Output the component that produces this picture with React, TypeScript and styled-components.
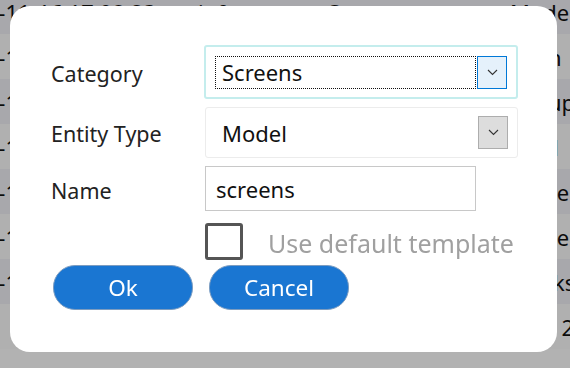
import React, { useState } from "react";
import styled, { createGlobalStyle } from "styled-components";

type LogRow = { time: string; level: string; category: string; kind: string };

const rows: LogRow[] = [
  { time: "2024-11-16 17:08:23", level: "info", category: "Screens", kind: "Model" },
  { time: "2024-11-16 17:08:11", level: "info", category: "Screens", kind: "Main" },
  { time: "2024-11-16 17:07:54", level: "info", category: "Layouts", kind: "Group" },
  { time: "2024-11-16 17:07:30", level: "warn", category: "Models", kind: "Field" },
  { time: "2024-11-16 17:06:48", level: "info", category: "Models", kind: "Model" },
  { time: "2024-11-16 17:06:02", level: "info", category: "Models", kind: "Model" },
  { time: "2024-11-16 17:05:19", level: "info", category: "Hooks", kind: "Hooks" },
  { time: "", level: "", category: "", kind: "\u00a0".repeat(9) + "2" },
];

const App = () => {
  const [useTemplate, setUseTemplate] = useState(false);
  const [name, setName] = useState("screens");

  return (
    <>
      <GlobalStyle />
      <Table>
        {rows.map((row, i) => (
          <Row key={i} $odd={i % 2 === 1}>
            <TimeCell>{row.time}</TimeCell>
            <Cell>{row.level}</Cell>
            <Cell>{row.category}</Cell>
            <KindCell>{row.kind}</KindCell>
          </Row>
        ))}
      </Table>

      <Overlay>
        <Dialog>
          <Form>
            <Label>Category</Label>
            <SelectBox $focused $height={54}>
              <FocusRing>Screens</FocusRing>
              <ArrowButton $active>
                <Chevron />
              </ArrowButton>
            </SelectBox>

            <Label>Entity Type</Label>
            <SelectBox $height={51}>
              <PlainValue>Model</PlainValue>
              <ArrowButton>
                <Chevron />
              </ArrowButton>
            </SelectBox>

            <Label $nudge={2}>Name</Label>
            <NameInput value={name} onChange={(e) => setName(e.target.value)} />

            <span />
            <CheckRow onClick={() => setUseTemplate(!useTemplate)}>
              <CheckBox $checked={useTemplate} />
              <CheckLabel>Use default template</CheckLabel>
            </CheckRow>
          </Form>

          <Buttons>
            <Button>Ok</Button>
            <Button>Cancel</Button>
          </Buttons>
        </Dialog>
      </Overlay>
    </>
  );
};

const Chevron = () => (
  <svg width="11" height="7" viewBox="0 0 11 7">
    <path d="M1 1l4.5 4.5L10 1" fill="none" stroke="#333" strokeWidth="1.1" />
  </svg>
);

export default App;

const GlobalStyle = createGlobalStyle`
  body {
    margin: 0;
    font-family: "Noto Sans", "Open Sans", sans-serif;
    overflow: hidden;
  }
`;

const Table = styled.div`
  display: flex;
  flex-direction: column;
  margin-top: -11px;
  width: 570px;
  overflow: hidden;
`;

const Row = styled.div<{ $odd: boolean }>`
  display: flex;
  align-items: center;
  height: 45px;
  flex-shrink: 0;
  background: ${(p) => (p.$odd ? "#fdfdfd" : "#f1f1f7")};
  color: #111;
  font-size: 22px;
  white-space: nowrap;
`;

const Cell = styled.div`
  width: 130px;
  flex-shrink: 0;
  overflow: hidden;
`;

const TimeCell = styled(Cell)`
  width: 250px;
  margin-left: -52px;
`;

const KindCell = styled(Cell)`
  width: 70px;
  margin-left: 52px;
`;

const Overlay = styled.div`
  position: fixed;
  inset: 0;
  background: rgba(0, 0, 0, 0.3);
  display: flex;
  align-items: flex-start;
  padding: 6px 0 0 10px;
`;

const Dialog = styled.div`
  width: 547px;
  height: 346px;
  box-sizing: border-box;
  background: #fff;
  border-radius: 20px;
  padding: 39px 0 0 41px;
  display: flex;
  flex-direction: column;
`;

const Form = styled.div`
  display: grid;
  grid-template-columns: 153px 314px;
  row-gap: 8px;
  align-items: center;
`;

const Label = styled.div<{ $nudge?: number }>`
  font-size: 21.5px;
  color: #222;
  padding-top: ${(p) => 2 + (p.$nudge ?? 0)}px;
`;

const SelectBox = styled.div<{ $focused?: boolean; $height: number }>`
  display: flex;
  align-items: center;
  height: ${(p) => p.$height}px;
  box-sizing: border-box;
  padding: 0 9px 0 ${(p) => (p.$focused ? 9 : 10)}px;
  border: ${(p) => (p.$focused ? "2px solid #c4eded" : "1px solid #ececec")};
  border-radius: 3px;
  margin-left: ${(p) => (p.$focused ? 0 : 1)}px;
  width: ${(p) => (p.$focused ? 314 : 313)}px;
`;

const FocusRing = styled.div`
  flex: 1;
  height: 33px;
  box-sizing: border-box;
  border: 1px dotted #111;
  display: flex;
  align-items: center;
  padding-left: 6px;
  font-size: 22px;
  color: #111;
`;

const PlainValue = styled.div`
  flex: 1;
  padding-left: 6px;
  font-size: 22px;
  color: #111;
`;

const ArrowButton = styled.div<{ $active?: boolean }>`
  width: 30px;
  height: 33px;
  box-sizing: border-box;
  display: flex;
  align-items: center;
  justify-content: center;
  background: ${(p) => (p.$active ? "#e5f1fb" : "#dddddd")};
  border: 1px solid ${(p) => (p.$active ? "#0078d7" : "#adadad")};
  margin-left: 1px;
`;

const NameInput = styled.input`
  width: 271px;
  height: 45px;
  box-sizing: border-box;
  margin: 0 0 0 1px;
  border: 1px solid #c8c8c8;
  padding: 0 10px;
  font-family: inherit;
  font-size: 22px;
  color: #111;
  outline: none;
`;

const CheckRow = styled.div`
  display: flex;
  align-items: center;
  gap: 25px;
  margin: 4px 0 0 1px;
  cursor: pointer;
`;

const CheckBox = styled.div<{ $checked: boolean }>`
  width: 38px;
  height: 37px;
  flex-shrink: 0;
  box-sizing: border-box;
  border: 3px solid #555;
  border-radius: 3px;
  background: ${(p) => (p.$checked ? "#555" : "#fff")};
`;

const CheckLabel = styled.span`
  font-size: 25px;
  line-height: 34px;
  padding-top: 2px;
  white-space: nowrap;
  color: #a0a0a0;
`;

const Buttons = styled.div`
  display: flex;
  gap: 16px;
  margin: 5px 0 0 2px;
`;

const Button = styled.button`
  width: 140px;
  height: 45px;
  border-radius: 22px;
  border: 1px solid #7c9cc0;
  background: #1a76d2;
  color: #fff;
  font-family: inherit;
  font-size: 22.5px;
  cursor: pointer;
`;
